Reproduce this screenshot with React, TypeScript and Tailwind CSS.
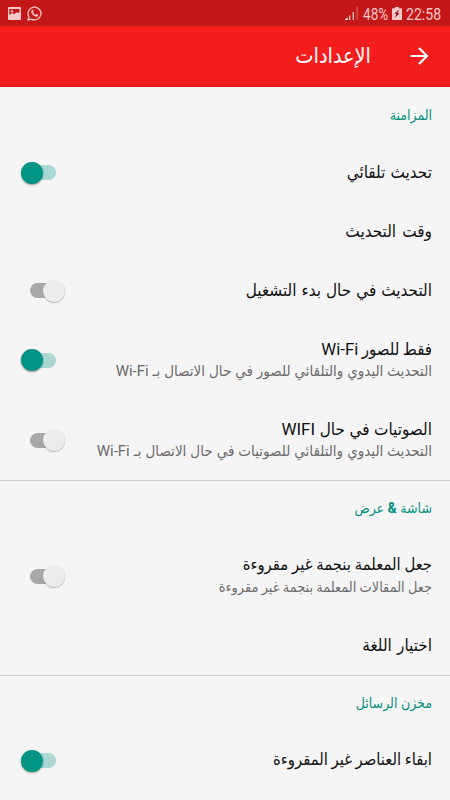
import { clsx } from 'clsx'

interface SettingRowProps {
    title: React.ReactNode
    summary?: React.ReactNode
    checked?: boolean
    spacing?: string
}

function Toggle({ checked }: { checked: boolean }) {
    return (
        <div
            role="switch"
            aria-checked={checked}
            dir="ltr"
            className={clsx('flex h-[22px] w-[35px] shrink-0 items-center', !checked && 'ml-[9px]')}
        >
            <div
                className={clsx(
                    'flex h-[15px] w-[35px] items-center rounded-full',
                    checked ? 'justify-start bg-[#a9d8d3]' : 'justify-end bg-[#a8a8a8]'
                )}
            >
                <div
                    className={clsx(
                        'h-[22px] w-[22px] shrink-0 rounded-full',
                        checked
                            ? 'bg-[#009485] shadow-[0_1px_2px_rgba(0,0,0,0.4)]'
                            : 'bg-[#ececec] shadow-[0_1px_1px_rgba(0,0,0,0.25)]'
                    )}
                />
            </div>
        </div>
    )
}

function SettingRow({ title, summary, checked, spacing }: SettingRowProps) {
    return (
        <div
            className={clsx(
                'flex shrink-0 items-center justify-between pr-[18px] pl-[21px]',
                summary ? 'h-20' : 'h-[59px]'
            )}
        >
            <div className={clsx('pb-[2px] whitespace-nowrap', spacing)}>
                <p className="text-[17px] leading-6 text-[#111111]">{title}</p>
                {summary && <p className="text-[15px] leading-[21px] text-[#6b6b6b]">{summary}</p>}
            </div>
            {checked !== undefined && <Toggle checked={checked} />}
        </div>
    )
}

function SectionHeader({ title, divider }: { title: React.ReactNode; divider?: boolean }) {
    return (
        <div
            className={clsx(
                'flex h-14 shrink-0 items-center border-t px-[18px] pb-px',
                divider ? 'border-[#cccccc]' : 'border-transparent'
            )}
        >
            <h2 className="text-[14px] text-[#009080]">{title}</h2>
        </div>
    )
}

function StatusBar() {
    return (
        <div dir="ltr" className="flex h-[26px] shrink-0 items-center justify-between bg-[#c41718] pr-[9px] pl-2 text-[#f7c8c8]">
            <div className="flex items-center gap-[6px] pt-px">
                <svg width="13" height="13" viewBox="0 0 13 13">
                    <path
                        fill="currentColor"
                        fillRule="evenodd"
                        d="M1 0h11a1 1 0 0 1 1 1v11a1 1 0 0 1-1 1H1a1 1 0 0 1-1-1V1a1 1 0 0 1 1-1Zm.3 2v6l3-2 1.700 1.200 2.500-2 1.500.8 1.500-1V2Zm2.700 1a1.200 1.200 0 1 1 0 2.400A1.200 1.200 0 0 1 4 3Z"
                    />
                </svg>
                <svg width="15" height="15" viewBox="0 0 15 15" fill="none">
                    <path
                        d="M1 14l.9-3.400A6.400 6.400 0 1 1 4.400 13.100Z"
                        stroke="currentColor"
                        strokeWidth="1.300"
                        strokeLinejoin="round"
                    />
                    <path
                        fill="currentColor"
                        d="M5.100 3.900c.4-.3.900-.2 1 .1l.5 1.300c.1.4-.5.8-.5 1.100.4 1 1.300 1.900 2.400 2.300.3 0 .7-.8 1.100-.6l1.300.7c.4.2.1 1.300-.5 1.600-1.200.7-2.900 0-4.100-1.100C5 8 4.100 6.600 4.200 5.400c0-.6.4-1.200.9-1.500Z"
                    />
                </svg>
            </div>
            <div className="flex items-center pt-[2px] font-[Roboto,sans-serif] text-[17px] leading-4">
                <svg width="13" height="13" viewBox="0 0 13 13" className="mr-[5px] mb-px" fill="currentColor">
                    <path d="M0 13v-1l3-1.500V13ZM4 8.500h1.300V13H4ZM7.700 5H9v8H7.700Z" />
                    <path d="M11.500 0h1.200v13h-1.200Z" opacity=".4" />
                </svg>
                <span className="w-[26px] origin-left scale-x-[0.8]">48%</span>
                <svg width="10" height="13" viewBox="0 0 10 13" className="mr-1 mb-px ml-[3px]">
                    <path fill="currentColor" d="M3 0h4v1.200h2.500q.5 0 .5.5V12.500q0 .5-.5.5h-9q-.5 0-.5-.5V1.700q0-.5.5-.5H3Z" />
                    <path fill="#8f1516" d="M7.500 2.500 2.300 6.500 4.500 7 2.500 11l5-4.500L5.500 6Z" />
                </svg>
                <span className="w-[35px] origin-left scale-x-[0.83]">22:58</span>
            </div>
        </div>
    )
}

export default function App() {
    return (
        <div
            dir="rtl"
            lang="ar"
            className="flex h-[800px] w-[450px] flex-col overflow-hidden bg-[#f5f5f5] font-[Roboto,'DejaVu_Sans_Condensed','DejaVu_Sans',sans-serif]"
        >
            <StatusBar />
            <header className="flex h-[61px] shrink-0 items-center border-b border-[#d90f10] bg-[#f41d1d] pr-[21px] text-white">
                <svg width="19" height="18" viewBox="0 0 19 18" fill="none" stroke="currentColor" strokeWidth="2.200">
                    <path d="M0.500 9h16.500M9 1l8 8-8 8" />
                </svg>
                <h1 className="mr-[39px] text-[21.5px] leading-7">الإعدادات</h1>
            </header>
            <main className="flex flex-col">
                <SectionHeader title="المزامنة" />
                <SettingRow title="تحديث تلقائي" spacing="[word-spacing:1px]" checked />
                <SettingRow title="وقت التحديث" spacing="[word-spacing:2px]" />
                <SettingRow title="التحديث في حال بدء التشغيل" spacing="[word-spacing:0.8px]" checked={false} />
                <SettingRow
                    title={<span className="text-[16.8px] [word-spacing:-0.8px]">فقط للصور Wi-Fi</span>}
                    summary="التحديث اليدوي والتلقائي للصور في حال الاتصال بـ Wi-Fi"
                    spacing="[word-spacing:0.2px]"
                    checked
                />
                <SettingRow
                    title="الصوتيات في حال WIFI"
                    summary="التحديث اليدوي والتلقائي للصوتيات في حال الاتصال بـ Wi-Fi"
                    spacing="[word-spacing:0.3px]"
                    checked={false}
                />
                <SectionHeader
                    title={
                        <>
                            شاشة <span className="font-bold">&amp;</span> عرض
                        </>
                    }
                    divider
                />
                <SettingRow
                    title={<span className="text-[16.5px]">جعل المعلمة بنجمة غير مقروءة</span>}
                    summary={<span className="text-[14.4px]">جعل المقالات المعلمة بنجمة غير مقروءة</span>}
                    spacing="[word-spacing:-0.3px]"
                    checked={false}
                />
                <SettingRow title="اختيار اللغة" spacing="[word-spacing:1px]" />
                <SectionHeader title="مخزن الرسائل" divider />
                <SettingRow
                    title={<span className="text-[16.5px]">ابقاء العناصر غير المقروءة</span>}
                    spacing="[word-spacing:-0.5px]"
                    checked
                />
            </main>
        </div>
    )
}
